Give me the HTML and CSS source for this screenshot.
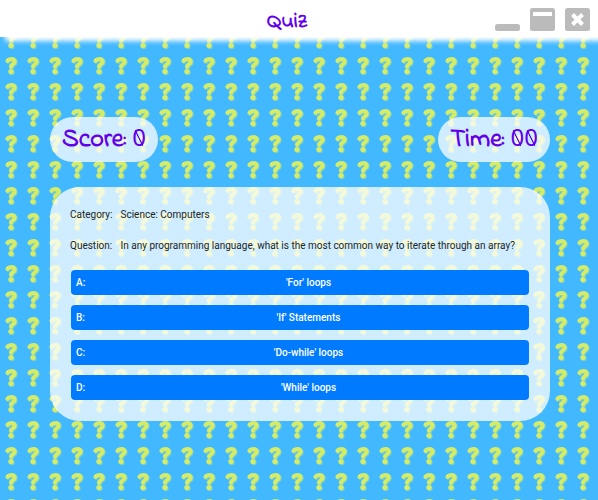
FILE: index.html
```html
<!DOCTYPE html>
<html lang="en">
<head>
<meta charset="utf-8">
<title>Quiz</title>
<link rel="stylesheet" href="styles.css">
</head>
<body>
<header class="titlebar">
  <h1 class="title">Quiz</h1>
  <div class="controls">
    <button class="control" type="button" aria-label="Minimize">
      <svg viewBox="0 0 25 23"><rect y="16" width="25" height="7" rx="2.5"/></svg>
    </button>
    <button class="control" type="button" aria-label="Maximize">
      <svg viewBox="0 0 25 23"><rect width="25" height="23" rx="2.5"/><path class="mark" d="M3 4h19v4H3z"/></svg>
    </button>
    <button class="control" type="button" aria-label="Close">
      <svg viewBox="0 0 25 23"><rect width="25" height="23" rx="2.5"/><path class="cross" d="M7.500 6.500l10 10M17.500 6.500l-10 10"/></svg>
    </button>
  </div>
</header>
<main class="quiz">
  <div class="status">
    <p class="pill">Score: <span class="zero">0</span></p>
    <p class="pill">Time: <span class="zero">0</span><span class="zero">0</span></p>
  </div>
  <section class="card">
    <dl class="details">
      <dt>Category:</dt><dd>Science: Computers</dd>
      <dt>Question:</dt><dd>In any programming language, what is the most common way to iterate through an array?</dd>
    </dl>
    <div class="answers">
      <button class="answer" type="button"><span class="letter">A:</span><span class="text">'For' loops</span></button>
      <button class="answer" type="button"><span class="letter">B:</span><span class="text">'If' Statements</span></button>
      <button class="answer" type="button"><span class="letter">C:</span><span class="text">'Do-while' loops</span></button>
      <button class="answer" type="button"><span class="letter">D:</span><span class="text">'While' loops</span></button>
    </div>
  </section>
</main>
</body>
</html>
```
FILE: styles.css
```css
* {
  box-sizing: border-box;
}

body {
  margin: 0;
  min-height: 100vh;
  color: #212529;
  font: 10px/16px "Segoe UI", Roboto, sans-serif;
  background: #42b8ff url("data:image/svg+xml,%3Csvg xmlns='http://www.w3.org/2000/svg' width='22' height='26'%3E%3Cdefs%3E%3Cfilter id='b' x='-50%25' y='-50%25' width='200%25' height='200%25'%3E%3CfeGaussianBlur stdDeviation='.7'/%3E%3C/filter%3E%3Cg id='q'%3E%3Cpath d='M7.4 8.9C9 6.6 14.8 6 14.8 9.5C14.8 12.2 10.8 12 11 14.8' fill='none' stroke='%23d4ec68' stroke-width='4' stroke-linecap='round'/%3E%3Ccircle cx='11' cy='19.6' r='2.7' fill='%23d4ec68'/%3E%3C/g%3E%3C/defs%3E%3Cuse href='%23q' x='1' y='1' filter='url(%23b)' opacity='.4'/%3E%3Cuse href='%23q'/%3E%3C/svg%3E");
}

.titlebar {
  display: grid;
  grid-template-columns: 1fr auto 1fr;
  align-items: center;
  height: 37px;
  padding: 0 8px;
  background: #fff;
  box-shadow: 5px 4px 5px #fff;
}

.title,
.pill {
  margin: 0;
  color: #6200ea;
  font-family: "Indie Flower", cursive;
  font-weight: 700;
}

.title {
  grid-column: 2;
  padding: 6px 24px 0 0;
  font-size: 22px;
  line-height: 32px;
}

.controls {
  display: flex;
  justify-content: flex-end;
  gap: 10px;
}

.control {
  width: 25px;
  height: 23px;
  padding: 0;
  border: 0;
  background: none;
}

.control svg {
  display: block;
  fill: #bbb;
}

.control .mark {
  fill: #fff;
}

.control .cross {
  fill: none;
  stroke: #fff;
  stroke-width: 4;
}

.quiz {
  padding: 80px 48px 0 50px;
}

.status {
  display: flex;
  justify-content: space-between;
  margin-bottom: 25px;
}

.pill {
  height: 45px;
  padding: 0 12px;
  border-radius: 30px;
  background: rgba(255, 255, 255, .75);
  font-size: 26px;
  line-height: 40px;
}

.zero {
  display: inline-block;
  font-family: "Noto Sans", sans-serif;
  font-size: 24px;
  font-weight: 400;
  background: linear-gradient(to top right, transparent 44%, #6200ea 48%, #6200ea 52%, transparent 56%) center 55% / 8px 16px no-repeat;
}

.card {
  padding: 20px 20px 21px;
  border-radius: 30px;
  background: rgba(255, 255, 255, .75);
}

.details {
  display: grid;
  grid-template-columns: auto 1fr;
  gap: 15px 8px;
  margin: 0 0 16px;
}

.details dd {
  margin: 0;
}

.answers {
  display: grid;
  gap: 10px;
  padding: 0 1px;
}

.answer {
  display: flex;
  align-items: center;
  height: 25px;
  padding: 0 5px;
  border: 0;
  border-radius: 4px;
  background: #007bff;
  color: #fff;
  font: inherit;
  font-weight: 500;
}

.letter {
  width: 17px;
  text-align: left;
}

.text {
  flex: 1;
}
```
